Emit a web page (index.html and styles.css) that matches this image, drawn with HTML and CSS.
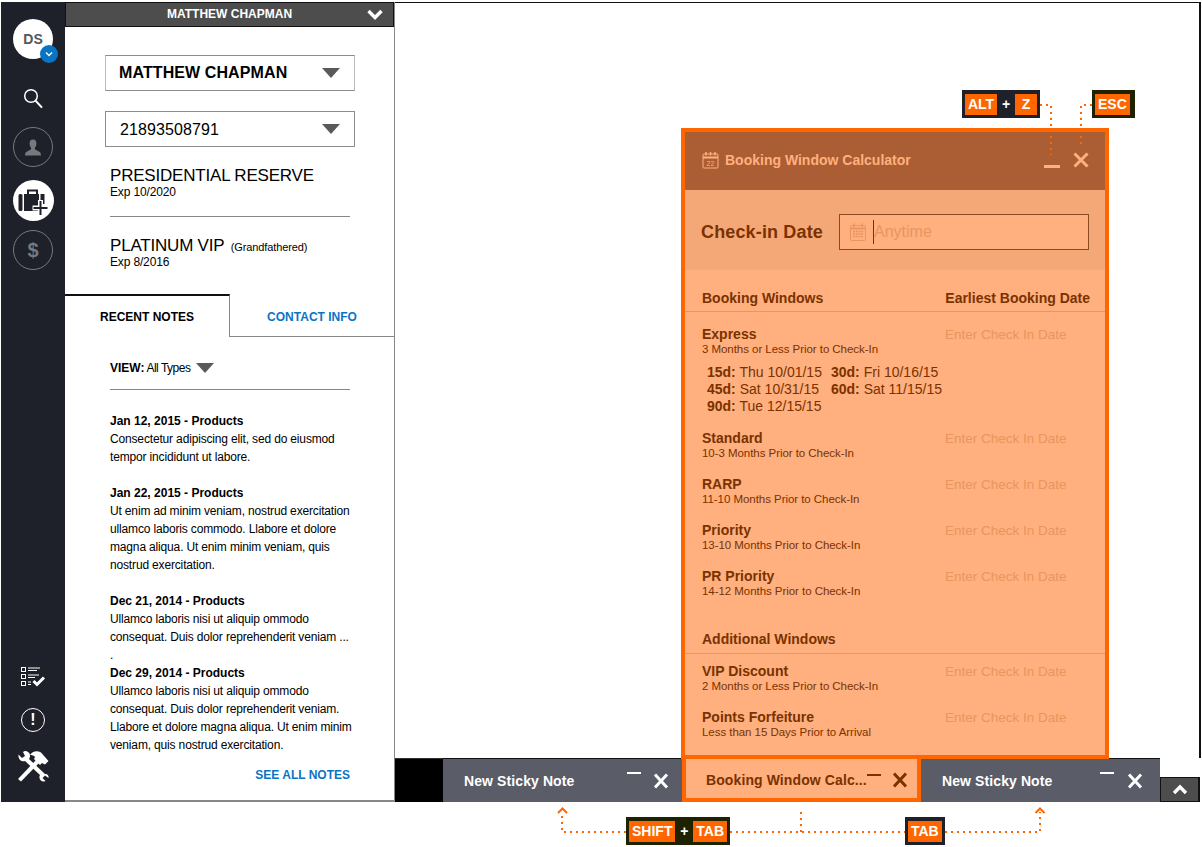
FILE: index.html
```html
<!DOCTYPE html>
<html lang="en">
<head>
    <meta charset="UTF-8">
    <title>Booking Window Calculator</title>
    <link rel="stylesheet" href="styles.css">
</head>
<body>
<div class="app">
    <nav class="rail">
        <div class="avatar">DS
            <span class="avatar-badge">
                <svg width="8" height="6" viewBox="0 0 8 6"><path d="M1 1.5 L4 4.5 L7 1.5" fill="none" stroke="#fff" stroke-width="1.3"/></svg>
            </span>
        </div>
        <svg class="rail-search" width="20" height="21" viewBox="0 0 20 21"><circle cx="8" cy="8" r="6.3" fill="none" stroke="#fff" stroke-width="1.5"/><path d="M12.6 12.8 L19 19.6" stroke="#fff" stroke-width="2"/></svg>
        <div class="rail-circle rail-person">
            <svg width="18" height="17" viewBox="0 0 18 17"><path d="M9 0.5 C11.6 0.5 12.6 2.6 12.4 5 C12.2 7 11.4 8.2 10.8 9 C10.6 10.4 11.6 11 13.6 11.8 C15.6 12.6 17 13.4 17 16.5 L1 16.5 C1 13.4 2.4 12.6 4.4 11.8 C6.4 11 7.4 10.4 7.2 9 C6.6 8.2 5.8 7 5.6 5 C5.4 2.6 6.4 0.5 9 0.5 Z" fill="#77797f"/></svg>
        </div>
        <div class="rail-circle rail-active">
            <svg width="36" height="30" viewBox="0 0 36 30"><path d="M13 8 V4.500 H22 V8" fill="none" stroke="#1e2129" stroke-width="2"/><rect x="3.500" y="8" width="4" height="17" rx="1.500" fill="#1e2129"/><rect x="9" y="8" width="15" height="17" fill="#1e2129"/><rect x="25.500" y="8" width="4" height="10" fill="#1e2129"/><path d="M25.500 14 V30 M17.500 22 H33.500" stroke="#fff" stroke-width="5"/><path d="M25.500 15 V29 M18.500 22 H32.500" stroke="#1e2129" stroke-width="2"/></svg>
        </div>
        <div class="rail-circle rail-dollar">$</div>
        <div class="rail-gap"></div>
        <svg class="rail-list" width="26" height="21" viewBox="0 0 26 21"><g fill="none" stroke="#fff"><rect x="1.5" y="1.5" width="4" height="4"/><rect x="1.5" y="8.5" width="4" height="4"/><rect x="1.5" y="15.5" width="4" height="4"/></g><path d="M8 2 H20 M8 4.5 H17 M8 9 H19 M8 11.5 H15 M8 16 H11 M8 18.5 H11" stroke="#fff" stroke-width="1"/><path d="M13.5 15 L17 18.5 L24 11.5" fill="none" stroke="#fff" stroke-width="3"/></svg>
        <div class="rail-alert">!</div>
        <svg class="rail-tools" width="32" height="32" viewBox="0 0 32 32"><path d="M1 29 L20 9 L23 12 L4 31.5 Z" fill="#fff"/><path d="M13 5 C15 1.5 20 0 24 2.5 L31.5 11 L28 14.5 L25 13 L23 15 L17 9 L18 7 C17 5.5 15 5 13 5 Z" fill="#fff"/><path d="M1.5 4.5 L5 8 L8 6 L6 2 C8 0 11 1 12.5 3.5 C13.5 5.5 13 7.5 12 9 L28 24 C30.5 23.5 32 25.5 31.5 28 L28 25.5 L25.5 28 L28.5 31 C26 32.5 23 31 22.5 28 C22.3 26.8 22.5 25.8 23 25 L8 11 C5 12 1 10 1.5 4.5 Z" fill="#fff"/></svg>
    </nav>

    <aside class="panel">
        <header class="panel-head">
            <span>MATTHEW CHAPMAN</span>
            <svg class="panel-chevron" width="16" height="11" viewBox="0 0 16 11"><path d="M1.5 2 L8 8.5 L14.5 2" fill="none" stroke="#fff" stroke-width="3.4"/></svg>
        </header>
        <div class="panel-top">
            <div class="select select-name">MATTHEW CHAPMAN<i class="arrow"></i></div>
            <div class="select select-num"><span class="select-val">21893508791</span><i class="arrow"></i></div>
            <div class="tier tier-first">PRESIDENTIAL RESERVE</div>
            <div class="exp">Exp 10/2020</div>
            <hr class="rule rule-tier">
            <div class="tier">PLATINUM VIP <small>(Grandfathered)</small></div>
            <div class="exp">Exp 8/2016</div>
        </div>
        <div class="tabs">
            <div class="tab tab-on">RECENT NOTES</div>
            <div class="tab tab-off">CONTACT INFO</div>
        </div>
        <div class="notes">
            <div class="view"><b>VIEW:</b><span class="view-val">All Types</span><i class="arrow arrow-view"></i></div>
            <hr class="rule rule-view">
            <div class="note">
                <b>Jan 12, 2015 - Products</b><br>
                Consectetur adipiscing elit, sed do eiusmod<br>
                tempor incididunt ut labore.
            </div>
            <div class="note">
                <b>Jan 22, 2015 - Products</b><br>
                Ut enim ad minim veniam, nostrud exercitation<br>
                ullamco laboris commodo. Llabore et dolore<br>
                magna aliqua. Ut enim minim veniam, quis<br>
                nostrud exercitation.
            </div>
            <div class="note note-tight">
                <b>Dec 21, 2014 - Products</b><br>
                Ullamco laboris nisi ut aliquip ommodo<br>
                consequat. Duis dolor reprehenderit veniam ...<br>
                .
            </div>
            <div class="note note-tight">
                <b>Dec 29, 2014 - Products</b><br>
                Ullamco laboris nisi ut aliquip ommodo<br>
                consequat. Duis dolor reprehenderit veniam.<br>
                Llabore et dolore magna aliqua. Ut enim minim<br>
                veniam, quis nostrud exercitation.
            </div>
            <a class="see-all">SEE ALL NOTES</a>
        </div>
    </aside>

    <main class="desk">
        <div class="desk-space"></div>
        <div class="dock">
            <div class="dock-blank"></div>
            <div class="dock-tab">
                <span class="dock-title">New Sticky Note</span>
                <svg class="dock-dash" width="14" height="3"><rect width="14" height="2" fill="#fff"/></svg>
                <svg class="dock-x" width="16" height="16" viewBox="0 0 16 16"><path d="M2 1.5 L14 14.5 M14 1.5 L2 14.5" stroke="#fff" stroke-width="3"/></svg>
            </div>
            <div class="dock-tab dock-tab-on">
                <span class="dock-title">Booking Window Calc...</span>
                <svg class="dock-dash" width="14" height="3"><rect width="14" height="2" fill="#7a3200"/></svg>
                <svg class="dock-x" width="16" height="16" viewBox="0 0 16 16"><path d="M2 1.5 L14 14.5 M14 1.5 L2 14.5" stroke="#7a3200" stroke-width="3"/></svg>
            </div>
            <div class="dock-tab dock-tab-last">
                <span class="dock-title">New Sticky Note</span>
                <svg class="dock-dash" width="14" height="3"><rect width="14" height="2" fill="#fff"/></svg>
                <svg class="dock-x" width="16" height="16" viewBox="0 0 16 16"><path d="M2 1.5 L14 14.5 M14 1.5 L2 14.5" stroke="#fff" stroke-width="3"/></svg>
            </div>
            <div class="dock-up">
                <svg width="16" height="11" viewBox="0 0 16 11"><path d="M2 9 L8 3 L14 9" fill="none" stroke="#fff" stroke-width="3.4"/></svg>
            </div>
        </div>

        <section class="calc">
            <header class="calc-head">
                <svg width="17" height="18" viewBox="0 0 17 18"><rect x="1" y="3" width="15" height="14" rx="1" fill="none" stroke="#ffb07e"/><path d="M1 6.5 H16" stroke="#ffb07e" stroke-width="2"/><path d="M4 1 V4.5 M8.5 1 V4.5 M13 1 V4.5" stroke="#ffb07e" stroke-width="1.5"/><text x="8.5" y="15" font-size="7" text-anchor="middle" fill="#ffb07e" font-family="Liberation Sans">22</text></svg>
                <span class="calc-title">Booking Window Calculator</span>
                <svg class="calc-dash" width="16" height="3"><rect width="16" height="3" fill="#ffb07e"/></svg>
                <svg class="calc-x" width="16" height="16" viewBox="0 0 16 16"><path d="M1.5 1.5 L14.5 14.5 M14.5 1.5 L1.5 14.5" stroke="#ffb07e" stroke-width="3"/></svg>
            </header>
            <div class="calc-date">
                <label class="calc-label">Check-in Date</label>
                <div class="calc-input">
                    <svg width="16" height="18" viewBox="0 0 16 18"><rect x="0.5" y="2.5" width="15" height="15" rx="1" fill="none" stroke="#e8955f"/><path d="M0.5 5.5 H15.5" stroke="#e8955f" stroke-width="2"/><path d="M4 0.5 V4 M12 0.5 V4" stroke="#e8955f" stroke-width="1.5"/><path d="M3 8.5 H13 M3 11 H13 M3 13.5 H13" stroke="#e8955f" stroke-width="1.4" stroke-dasharray="2 0.7"/></svg>
                    <span class="calc-caret"></span>
                    <span class="calc-any">Anytime</span>
                </div>
            </div>
            <div class="calc-body">
                <div class="sec-head sec-head-first"><span>Booking Windows</span><span class="sec-right">Earliest Booking Date</span></div>
                <div class="win win-express">
                    <div class="win-main"><b>Express</b><small>3 Months or Less Prior to Check-In</small></div>
                    <span class="win-date">Enter Check In Date</span>
                </div>
                <div class="dates">
                    <span><b>15d:</b> Thu 10/01/15</span><span><b>30d:</b> Fri 10/16/15</span>
                    <span><b>45d:</b> Sat 10/31/15</span><span><b>60d:</b> Sat 11/15/15</span>
                    <span><b>90d:</b> Tue 12/15/15</span>
                </div>
                <div class="win">
                    <div class="win-main"><b>Standard</b><small>10-3 Months Prior to Check-In</small></div>
                    <span class="win-date">Enter Check In Date</span>
                </div>
                <div class="win">
                    <div class="win-main"><b>RARP</b><small>11-10 Months Prior to Check-In</small></div>
                    <span class="win-date">Enter Check In Date</span>
                </div>
                <div class="win">
                    <div class="win-main"><b>Priority</b><small>13-10 Months Prior to Check-In</small></div>
                    <span class="win-date">Enter Check In Date</span>
                </div>
                <div class="win">
                    <div class="win-main"><b>PR Priority</b><small>14-12 Months Prior to Check-In</small></div>
                    <span class="win-date">Enter Check In Date</span>
                </div>
                <div class="sec-head sec-head-add"><span>Additional Windows</span></div>
                <div class="win win-vip">
                    <div class="win-main"><b>VIP Discount</b><small>2 Months or Less Prior to Check-In</small></div>
                    <span class="win-date">Enter Check In Date</span>
                </div>
                <div class="win">
                    <div class="win-main"><b>Points Forfeiture</b><small>Less than 15 Days Prior to Arrival</small></div>
                    <span class="win-date">Enter Check In Date</span>
                </div>
            </div>
        </section>
    </main>
</div>

<!-- keyboard hints drawn over the page -->
<svg class="hint-lines" width="1202" height="847" viewBox="0 0 1202 847">
    <g fill="none" stroke="#ff6600" stroke-width="2" stroke-dasharray="2 4">
        <path d="M1040 105 H1051 V155"/>
        <path d="M1092 105 H1081 V146"/>
        <path d="M626 832 H562 V812"/>
        <path d="M730 832 H905"/>
        <path d="M801 832 V812"/>
        <path d="M945 832 H1040 V812"/>
    </g>
    <path d="M558 813 L562.500 808.500 L567 813 M1035.500 813 L1040 808.500 L1044.500 813" fill="none" stroke="#ff6600" stroke-width="2"/>
</svg>
<div class="keys keys-alt"><span class="key">ALT</span><b>+</b><span class="key key-z">Z</span></div>
<div class="keys keys-esc keys-olive"><span class="key">ESC</span></div>
<div class="keys keys-shift keys-olive"><span class="key">SHIFT</span><b>+</b><span class="key">TAB</span></div>
<div class="keys keys-tab"><span class="key">TAB</span></div>
</body>
</html>
```

FILE: styles.css
```css
* {
    box-sizing: border-box;
}
html, body {
    margin: 0;
    height: 847px;
    overflow: hidden;
    background: #fff;
}
body {
    font-family: "Liberation Sans", Arial, sans-serif;
    color: #000;
    position: relative;
}
.app {
    display: flex;
    width: 1200px;
    height: 800px;
    margin: 2px 0 0 1px;
}

/* left rail */
.rail {
    width: 64px;
    background: #1e2129;
    display: flex;
    flex-direction: column;
    align-items: center;
    padding-top: 17px;
}
.avatar {
    width: 40px;
    height: 40px;
    border-radius: 50%;
    background: #fff;
    color: #55575c;
    font-size: 14px;
    font-weight: bold;
    text-align: center;
    line-height: 40px;
    position: relative;
}
.avatar-badge {
    position: absolute;
    left: 27px;
    top: 26px;
    width: 18px;
    height: 18px;
    border-radius: 50%;
    background: #0a74c4;
    display: flex;
    align-items: center;
    justify-content: center;
}
.rail-search {
    margin-top: 29px;
}
.rail-circle {
    width: 40px;
    height: 40px;
    border-radius: 50%;
    border: 1px solid #77797f;
    display: flex;
    align-items: center;
    justify-content: center;
}
.rail-person {
    margin-top: 18px;
}
.rail-active {
    margin-top: 13px;
    width: 41px;
    height: 41px;
    background: #fff;
    border: 0;
    overflow: visible;
}
.rail-active svg {
    flex: none;
}
.rail-dollar {
    margin-top: 9px;
    color: #77797f;
    font-size: 20px;
    font-weight: bold;
}
.rail-gap {
    flex: 1;
}
.rail-alert {
    width: 24px;
    height: 24px;
    margin-top: 21px;
    border: 1px solid #fff;
    border-radius: 50%;
    color: #fff;
    font-size: 16px;
    font-weight: bold;
    line-height: 22px;
    text-align: center;
}
.rail-tools {
    margin-top: 18px;
    margin-bottom: 20px;
}

/* customer panel */
.panel {
    width: 330px;
    background: #fff;
    border-right: 1px solid #888;
    border-bottom: 2px solid #888;
    display: flex;
    flex-direction: column;
}
.panel-head {
    height: 25px;
    background: #4d4d4d;
    border: 1px solid #111;
    color: #fff;
    font-size: 12px;
    font-weight: bold;
    line-height: 23px;
    text-align: center;
    position: relative;
}
.panel-chevron {
    position: absolute;
    right: 10px;
    top: 6px;
}
.panel-top {
    padding: 28px 40px 0 40px;
    height: 267px;
}
.select {
    width: 250px;
    height: 36px;
    border: 1px solid #8c8c8c;
    display: flex;
    align-items: center;
    justify-content: space-between;
    padding: 0 14px 0 14px;
}
.select-name {
    font-size: 16px;
    font-weight: bold;
    letter-spacing: 0.1px;
    padding-left: 13px;
    border-left-color: #bbb;
    border-right-color: #bbb;
}
.select-num {
    margin-top: 20px;
    font-size: 16px;
    letter-spacing: 0.1px;
}
.select-val {
    padding-top: 1px;
}
.arrow {
    display: block;
    width: 0;
    height: 0;
    border-left: 9px solid transparent;
    border-right: 9px solid transparent;
    border-top: 10px solid #5a5a5a;
}
.tier {
    margin-left: 5px;
    height: 20px;
    font-size: 17px;
    line-height: 20px;
    letter-spacing: -0.2px;
}
.tier small {
    margin-left: 2px;
    font-size: 11px;
    letter-spacing: -0.1px;
}
.tier-first {
    margin-top: 19px;
}
.exp {
    margin-left: 5px;
    font-size: 12px;
    line-height: 13px;
    letter-spacing: -0.15px;
}
.rule {
    margin: 0;
    border: 0;
    border-top: 1px solid #888;
}
.rule-tier {
    width: 240px;
    margin: 17px 0 19px 5px;
}
.tabs {
    display: flex;
    height: 43px;
}
.tab {
    font-size: 12px;
    font-weight: bold;
    text-align: center;
    padding-top: 14px;
}
.tab-on {
    width: 165px;
    border-top: 2px solid #111;
    border-right: 1px solid #888;
}
.tab-off {
    flex: 1;
    color: #0a74c4;
    border-bottom: 1px solid #888;
    border-top: 2px solid transparent;
}
.notes {
    padding: 0 44px 0 45px;
    font-size: 12px;
    line-height: 18px;
    letter-spacing: -0.16px;
    flex: 1;
    display: flex;
    flex-direction: column;
}
.notes b {
    letter-spacing: 0;
}
.view {
    margin-top: 22px;
    display: flex;
    align-items: center;
}
.view b {
    margin-right: 2px;
}
.view-val {
    letter-spacing: -0.5px;
}
.arrow-view {
    margin-left: 6px;
}
.rule-view {
    margin-top: 12px;
    margin-bottom: 22px;
}
.note {
    white-space: nowrap;
    margin-bottom: 18px;
}
.note-tight {
    margin-bottom: 0;
}
.note-tight + .note-tight {
    margin-bottom: 12px;
}
.see-all {
    align-self: flex-end;
    color: #0a74c4;
    font-weight: bold;
    letter-spacing: 0;
}

/* desk area on the right */
.desk {
    flex: 1;
    position: relative;
    display: flex;
    flex-direction: column;
    border-top: 1px solid #111;
    border-right: 2px solid #111;
}
.desk-space {
    flex: 1;
}
.dock {
    height: 44px;
    display: flex;
    margin-right: -2px;
    background: #fff;
    align-items: flex-end;
}
.dock-blank {
    width: 48px;
    height: 44px;
    background: #000;
    border-top: 1px solid #333;
}
.dock-tab {
    width: 239px;
    height: 44px;
    background: #5a5c68;
    border-top: 1px solid #111;
    color: #fff;
    display: flex;
    align-items: center;
    padding: 0 13px 0 21px;
}
.dock-title {
    flex: 1;
    font-size: 14px;
    font-weight: bold;
    letter-spacing: 0.1px;
    white-space: nowrap;
}
.dock-dash {
    align-self: flex-start;
    margin-top: 13px;
    margin-right: 12px;
}
.dock-tab-on {
    background: #ffb07e;
    border: 4px solid #ff6600;
    border-top: 0;
    color: #7a3200;
    padding: 4px 9px 0 20px;
}
.dock-tab-on .dock-dash {
    margin-top: 12px;
    margin-right: 11px;
}
.dock-tab-last {
    padding-right: 17px;
}
.dock-tab-last .dock-dash {
    margin-right: 13px;
}
.dock-up {
    width: 40px;
    height: 25px;
    background: #4d4d4d;
    border: 1px solid #111;
    border-right: 2px solid #111;
    display: flex;
    align-items: center;
    justify-content: center;
}

/* booking window dialog */
.calc {
    position: absolute;
    left: 286px;
    top: 125px;
    width: 428px;
    height: 631px;
    border: 4px solid #ff6600;
    background: #ffb07e;
    color: #7a3200;
    display: flex;
    flex-direction: column;
}
.calc-head {
    flex: none;
    height: 58px;
    background: #ab5e33;
    display: flex;
    align-items: center;
    padding: 0 16px 2px 17px;
}
.calc-title {
    flex: 1;
    margin-left: 6px;
    color: #ffb07e;
    font-size: 14px;
    font-weight: bold;
}
.calc-dash {
    margin-top: 12px;
    margin-right: 13px;
}
.calc-date {
    flex: none;
    height: 80px;
    background: #f4a878;
    display: flex;
    align-items: center;
    padding: 3px 16px 0;
}
.calc-label {
    width: 138px;
    font-size: 18px;
    font-weight: bold;
    letter-spacing: 0.15px;
    padding-top: 1px;
}
.calc-input {
    width: 250px;
    height: 36px;
    border: 1px solid #8a4a20;
    background: #ffb07e;
    display: flex;
    align-items: center;
    padding-left: 10px;
}
.calc-caret {
    width: 1px;
    height: 24px;
    margin-left: 7px;
    background: #7a3200;
}
.calc-any {
    color: #e8955f;
    font-size: 16px;
}
.calc-body {
    flex: 1;
    min-height: 0;
}
.sec-head {
    display: flex;
    justify-content: space-between;
    height: 21px;
    padding: 0 15px 0 17px;
    font-size: 14px;
    font-weight: bold;
    line-height: 15px;
    border-bottom: 1px solid #e8955f;
}
.sec-head-first {
    margin-top: 21px;
}
.sec-head-add {
    margin-top: 17px;
    height: 22px;
}
.win {
    display: flex;
    padding-left: 17px;
    height: 46px;
}
.win-express {
    margin-top: 15px;
    height: 31px;
}
.win-vip {
    margin-top: 10px;
}
.win-main {
    width: 243px;
}
.win-main b {
    display: block;
    font-size: 14px;
    line-height: 15px;
}
.win-main small {
    display: block;
    font-size: 11.5px;
    line-height: 15px;
    letter-spacing: -0.05px;
}
.win-date {
    color: #e8955f;
    font-size: 13.5px;
    line-height: 15px;
    letter-spacing: 0;
}
.dates {
    display: grid;
    grid-template-columns: 124px 1fr;
    margin: 6px 0 16px 22px;
    font-size: 14px;
    line-height: 17px;
}

/* key hints */
.hint-lines {
    position: absolute;
    left: 0;
    top: 0;
}
.keys {
    position: absolute;
    height: 28px;
    background: #1e2129;
    display: flex;
    align-items: center;
    justify-content: space-between;
    padding: 0 3px;
    color: #fff;
    font-size: 14px;
    font-weight: bold;
}
.keys-olive {
    background: #1f2200;
}
.key {
    background: #ff6600;
    height: 21px;
    line-height: 21px;
    padding: 0 3px;
    text-align: center;
    flex: none;
}
.key-z {
    width: 22px;
}
.keys-alt {
    left: 962px;
    top: 90px;
    width: 78px;
}
.keys-esc {
    left: 1092px;
    top: 90px;
    width: 43px;
}
.keys-shift {
    left: 626px;
    top: 817px;
    width: 104px;
}
.keys-tab {
    left: 905px;
    top: 817px;
    width: 40px;
}
```
